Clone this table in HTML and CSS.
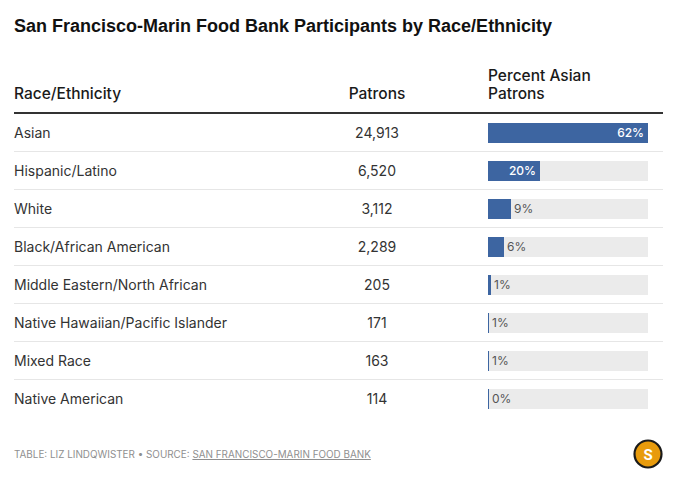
FILE: index.html
```html
<!DOCTYPE html>
<html>
<head>
<meta charset="utf-8">
<link rel="stylesheet" href="styles.css">
</head>
<body>
<div class="page">
  <h1 class="title">San Francisco-Marin Food Bank Participants by Race/Ethnicity</h1>
  <div class="table">
    <div class="row head">
      <div class="c1">Race/Ethnicity</div>
      <div class="c2">Patrons</div>
      <div class="c3">Percent Asian<br>Patrons</div>
    </div>
    <div class="row">
      <div class="c1">Asian</div>
      <div class="c2">24,913</div>
      <div class="c3"><div class="track"><div class="bar" style="width:160px"><span class="in">62%</span></div></div></div>
    </div>
    <div class="row">
      <div class="c1">Hispanic/Latino</div>
      <div class="c2">6,520</div>
      <div class="c3"><div class="track"><div class="bar" style="width:52px"><span class="in">20%</span></div></div></div>
    </div>
    <div class="row">
      <div class="c1">White</div>
      <div class="c2">3,112</div>
      <div class="c3"><div class="track"><div class="bar" style="width:23px"></div><span class="out">9%</span></div></div>
    </div>
    <div class="row">
      <div class="c1">Black/African American</div>
      <div class="c2">2,289</div>
      <div class="c3"><div class="track"><div class="bar" style="width:16px"></div><span class="out">6%</span></div></div>
    </div>
    <div class="row">
      <div class="c1">Middle Eastern/North African</div>
      <div class="c2">205</div>
      <div class="c3"><div class="track"><div class="bar" style="width:3px"></div><span class="out">1%</span></div></div>
    </div>
    <div class="row">
      <div class="c1">Native Hawaiian/Pacific Islander</div>
      <div class="c2">171</div>
      <div class="c3"><div class="track"><div class="bar" style="width:1px"></div><span class="out">1%</span></div></div>
    </div>
    <div class="row">
      <div class="c1">Mixed Race</div>
      <div class="c2">163</div>
      <div class="c3"><div class="track"><div class="bar" style="width:1px"></div><span class="out">1%</span></div></div>
    </div>
    <div class="row last">
      <div class="c1">Native American</div>
      <div class="c2">114</div>
      <div class="c3"><div class="track"><div class="bar" style="width:1px"></div><span class="out">0%</span></div></div>
    </div>
  </div>
  <div class="footer">
    <div class="credit">Table: Liz Lindqwister • Source: <a href="#">San Francisco-Marin Food Bank</a></div>
    <svg class="logo" width="30" height="30" viewBox="0 0 30 30">
      <circle cx="15" cy="15" r="13.5" fill="#e89b0c" stroke="#1a1a1a" stroke-width="2.2"/>
      <text x="15" y="20.5" text-anchor="middle" font-family="Roboto, 'Liberation Sans', sans-serif" font-weight="700" font-size="15" fill="#fff">S</text>
    </svg>
  </div>
</div>
</body>
</html>
```
FILE: styles.css
```css
html, body {
  margin: 0;
  padding: 0;
  background: #fff;
}
.page {
  padding: 14px 10px 0 14px;
  font-family: Inter, "Noto Sans", sans-serif;
  color: #333;
}
.title {
  margin: 0;
  font-family: "Liberation Sans", Arial, sans-serif;
  font-weight: 700;
  font-size: 18px;
  line-height: 24px;
  color: #111;
}
.table {
  margin-top: 29px;
  width: 649px;
}
.row {
  display: grid;
  grid-template-columns: 252px 222px 175px;
  align-items: center;
  height: 37px;
  border-bottom: 1px solid #e6e6e6;
  font-size: 14px;
  font-weight: 400;
}
.row.last {
  border-bottom: none;
}
.row.head {
  height: auto;
  align-items: end;
  padding-bottom: 9px;
  border-bottom: 2px solid #333;
  font-weight: 500;
  font-size: 15.5px;
  line-height: 18px;
  color: #1a1a1a;
}
.c2 {
  text-align: center;
}
.track {
  position: relative;
  display: flex;
  align-items: center;
  width: 160px;
  height: 20px;
  background: #ebebeb;
}
.bar {
  height: 20px;
  background: #3d65a1;
  display: flex;
  align-items: center;
  justify-content: flex-end;
  flex: none;
}
.in {
  color: #fff;
  font-size: 12px;
  font-weight: 500;
  padding-right: 4px;
}
.out {
  color: #555;
  font-size: 12px;
  padding-left: 3px;
}
.footer {
  display: flex;
  justify-content: space-between;
  align-items: center;
  width: 649px;
  margin-top: 22px;
}
.credit {
  font-size: 9.9px;
  text-transform: uppercase;
  color: #8f8f8f;
}
.credit a {
  color: #8f8f8f;
  text-decoration: underline;
}
.logo {
  display: block;
}
```
